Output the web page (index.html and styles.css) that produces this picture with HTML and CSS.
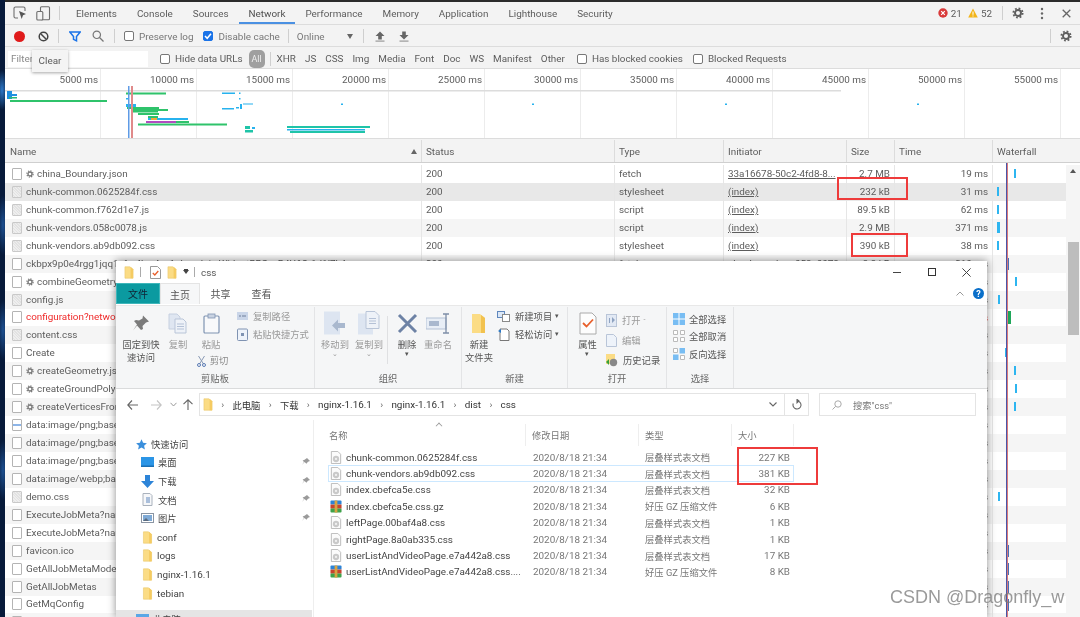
FILE: index.html
```html
<!DOCTYPE html>
<html lang="zh">
<head>
<meta charset="utf-8">
<title>Network</title>
<link rel="stylesheet" href="styles.css">
</head>
<body>
<svg class="defs" width="0" height="0" aria-hidden="true">
  <symbol id="gear" viewBox="0 0 16 16"><circle cx="8" cy="8" r="4" fill="none" stroke="currentColor" stroke-width="2.6"/><circle cx="8" cy="8" r="6.2" fill="none" stroke="currentColor" stroke-width="2.4" stroke-dasharray="2.4 2.47"/></symbol>
  <symbol id="folder" viewBox="0 0 12 16"><path d="M1 1h6l4 3v11H1z" fill="#fbdc85" stroke="#e9c768" stroke-width=".7"/><path d="M8 1v14h3V4z" fill="#f5cb62"/></symbol>
  <symbol id="cssf" viewBox="0 0 12 14"><path d="M1 .5h7l3 3v10H1z" fill="#fbfbfb" stroke="#b9b9b9"/><circle cx="6" cy="8.6" r="3.4" fill="#c9c9c9"/><circle cx="6" cy="8.6" r="1.2" fill="#f2f2f2"/></symbol>
  <symbol id="rar" viewBox="0 0 13 13"><rect x=".5" width="12" height="4.4" rx="1" fill="#2c83d6"/><rect x=".5" y="4.4" width="12" height="4.4" fill="#c7442f"/><rect x=".5" y="8.8" width="12" height="4.2" rx="1" fill="#3fa24a"/><rect x="5" width="3" height="13" fill="#d9a441"/></symbol>
  <symbol id="pin" viewBox="0 0 10 10"><path d="M6 1l3 3-2 .7-1.6 2L3.600 5 1 8l2-3-1.400-1.500 2-.8z" fill="#9a9a9a"/></symbol>
</svg>

<div class="screen">
  <div class="desk"></div>
  <main class="devtools">

    <header class="tabbar">
      <div class="tool-ic">
        <svg width="14" height="14" viewBox="0 0 14 14"><path d="M5 12H2.500A1.500 1.500 0 0 1 1 10.500v-8A1.500 1.500 0 0 1 2.500 1h8A1.500 1.500 0 0 1 12 2.500V5" fill="none" stroke="#6e6e6e" stroke-width="1.100"/><path d="M6 5l7 3-3 1.200L8.700 13z" fill="#555"/></svg>
      </div>
      <div class="tool-ic second">
        <svg width="15" height="15" viewBox="0 0 15 15"><rect x="4.500" y=".8" width="9" height="13" rx="1" fill="none" stroke="#6e6e6e" stroke-width="1.100"/><rect x=".8" y="5.500" width="6" height="8.500" rx="1" fill="#f3f3f3" stroke="#6e6e6e" stroke-width="1.100"/></svg>
      </div>
      <span class="vsep tabsep"></span>
      <nav class="tabs">
        <span class="tab">Elements</span>
        <span class="tab">Console</span>
        <span class="tab">Sources</span>
        <span class="tab active">Network</span>
        <span class="tab">Performance</span>
        <span class="tab">Memory</span>
        <span class="tab">Application</span>
        <span class="tab">Lighthouse</span>
        <span class="tab">Security</span>
      </nav>
      <div class="status-ic">
        <svg width="10" height="10" viewBox="0 0 10 10"><circle cx="5" cy="5" r="4.700" fill="#d93a3a"/><path d="M3.200 3.200l3.600 3.600M6.800 3.200l-3.600 3.600" stroke="#fff" stroke-width="1.200"/></svg>
        <span class="count">21</span>
        <svg width="10" height="10" viewBox="0 0 10 10"><path d="M5 .5L9.800 9.500H.2z" fill="#f2b418"/><rect x="4.500" y="3.500" width="1" height="3.300" fill="#fff"/><rect x="4.500" y="7.500" width="1" height="1" fill="#fff"/></svg>
        <span class="count">52</span>
      </div>
      <span class="vsep statsep"></span>
      <svg class="gear tabgear"><use href="#gear"/></svg>
      <svg class="dots" width="4" height="13" viewBox="0 0 4 13"><circle cx="2" cy="2" r="1.200" fill="#666"/><circle cx="2" cy="6.500" r="1.200" fill="#666"/><circle cx="2" cy="11" r="1.200" fill="#666"/></svg>
      <svg class="xclose" width="9" height="9" viewBox="0 0 9 9"><path d="M.7.7l7.600 7.600M8.300.7L.7 8.300" stroke="#666" stroke-width="1.300"/></svg>
    </header>

    <section class="toolbar">
      <span class="rec"></span>
      <svg class="ic-clear" width="11" height="11" viewBox="0 0 11 11"><circle cx="5.500" cy="5.500" r="4.300" fill="none" stroke="#444" stroke-width="1.500"/><path d="M2.500 2.500l6 6" stroke="#444" stroke-width="1.500"/></svg>
      <span class="vsep s1"></span>
      <svg class="ic-filter" width="12" height="11" viewBox="0 0 12 11"><path d="M.8 1h10.400L7.500 5.400V9.800L4.500 8.300V5.400z" fill="none" stroke="#1a73e8" stroke-width="1.500"/></svg>
      <svg class="ic-search" width="12" height="12" viewBox="0 0 12 12"><circle cx="4.800" cy="4.800" r="3.700" fill="none" stroke="#777" stroke-width="1.200"/><path d="M7.500 7.500l4 4" stroke="#777" stroke-width="1.300"/></svg>
      <span class="vsep s2"></span>
      <span class="cb"></span><span class="lbl pres">Preserve log</span>
      <span class="cb on"><svg width="10" height="10" viewBox="0 0 10 10"><path d="M2 5l2.200 2.300L8 2.800" fill="none" stroke="#fff" stroke-width="1.500"/></svg></span><span class="lbl dis">Disable cache</span>
      <span class="vsep s3"></span>
      <span class="lbl online">Online</span>
      <span class="caret"></span>
      <span class="vsep s4"></span>
      <svg class="ic-up" width="10" height="11" viewBox="0 0 10 11"><path d="M5 .5L9.500 5H6.800v3.500H3.200V5H.5z" fill="#666"/><rect x=".5" y="9.500" width="9" height="1.200" fill="#999"/></svg>
      <svg class="ic-down" width="10" height="11" viewBox="0 0 10 11"><path d="M5 8.500L.5 4h2.700V.5h3.600V4h2.700z" fill="#666"/><rect x=".5" y="9.500" width="9" height="1.200" fill="#999"/></svg>
      <span class="spacer"></span>
      <span class="vsep s5"></span>
      <svg class="gear bargear"><use href="#gear"/></svg>
    </section>

    <section class="filterbar">
      <div class="finput">Filter</div>
      <span class="cb hide"></span><span class="lbl">Hide data URLs</span>
      <span class="pill">All</span>
      <span class="vsep s6"></span>
      <span class="ft">XHR</span><span class="ft">JS</span><span class="ft">CSS</span><span class="ft">Img</span><span class="ft">Media</span><span class="ft">Font</span><span class="ft">Doc</span><span class="ft">WS</span><span class="ft">Manifest</span><span class="ft">Other</span>
      <span class="cb blk1"></span><span class="lbl">Has blocked cookies</span>
      <span class="cb blk2"></span><span class="lbl">Blocked Requests</span>
    </section>

    <section class="overview">
      <div class="ticks">
        <span>5000 ms</span><span>10000 ms</span><span>15000 ms</span><span>20000 ms</span><span>25000 ms</span><span>30000 ms</span><span>35000 ms</span><span>40000 ms</span><span>45000 ms</span><span>50000 ms</span><span>55000 ms</span>
      </div>
      <svg class="chart" width="1075" height="69" viewBox="5 69 1075 69">
        <rect x="5" y="90" width="836" height="1.500" fill="#dcdcdc"/>
        <rect x="7" y="91" width="5" height="8" fill="#1f8fe0"/><rect x="11" y="94" width="6" height="2" fill="#1f8fe0"/>
        <rect x="9" y="97" width="8" height="1.500" fill="#28b87a"/>
        <rect x="10" y="100" width="97" height="2" fill="#2fc36b"/>
        <rect x="126" y="92.500" width="40" height="2" fill="#2fc36b"/>
        <rect x="222" y="92.500" width="13" height="1.500" fill="#27b2ee"/><rect x="239" y="92.500" width="1.500" height="1.500" fill="#27b2ee"/><rect x="239" y="98" width="1.500" height="1.500" fill="#27b2ee"/>
        <rect x="126" y="98" width="3" height="1.500" fill="#27b2ee"/>
        <rect x="126" y="104" width="10" height="3" fill="#27b2ee"/>
        <rect x="127" y="107" width="32" height="2" fill="#2fc36b"/><rect x="131" y="109" width="37" height="2" fill="#2fc36b"/><rect x="132" y="111" width="26" height="1.500" fill="#2fc36b"/>
        <rect x="138" y="113" width="21" height="2" fill="#2fc36b"/>
        <rect x="148" y="116" width="10" height="2" fill="#2fc36b"/>
        <rect x="148" y="118" width="40" height="2" fill="#27b2ee"/><rect x="151" y="118" width="6" height="2" fill="#f2a93b"/>
        <rect x="146" y="121" width="30" height="2" fill="#b04cc0"/><rect x="176" y="121" width="13" height="2" fill="#2fc36b"/>
        <rect x="138" y="123.500" width="89" height="2" fill="#2fc36b"/>
        <rect x="222" y="108" width="12" height="1.500" fill="#27b2ee"/><rect x="236" y="107" width="3" height="1.500" fill="#27b2ee"/><rect x="240" y="104" width="2" height="5" fill="#27b2ee"/><rect x="243" y="103.500" width="10" height="1" fill="#27b2ee"/>
        <rect x="341" y="103.500" width="2" height="1.500" fill="#27b2ee"/><rect x="532" y="103.500" width="2" height="1.500" fill="#27b2ee"/><rect x="725" y="103.500" width="2" height="1.500" fill="#27b2ee"/><rect x="917" y="103.500" width="2" height="1.500" fill="#27b2ee"/>
        <rect x="245" y="126" width="5" height="3" fill="#1fc4a8"/><rect x="245" y="130" width="8" height="2.500" fill="#1fc4a8"/><rect x="252" y="127" width="3" height="2" fill="#27b2ee"/>
        <rect x="287" y="126" width="83" height="2" fill="#1fc4a8"/><rect x="287" y="129" width="78" height="1.500" fill="#27b2ee"/><rect x="290" y="131" width="75" height="2" fill="#1fc4a8"/>
        <rect x="128" y="86" width="1.500" height="52" fill="#5f9be6"/><rect x="131" y="86" width="2" height="52" fill="#e08a8a"/>
      </svg>
    </section>

    <div class="thead">
      <div class="th name-h">Name<span class="sort"></span></div>
      <div class="th">Status</div>
      <div class="th">Type</div>
      <div class="th">Initiator</div>
      <div class="th">Size</div>
      <div class="th">Time</div>
      <div class="th wf-h">Waterfall</div>
    </div>

    <div class="tbody">
      <div class="rows">
        <div class="row"><div class="cell name"><i class="fi"></i><svg class="mini"><use href="#gear"/></svg><span>china_Boundary.json</span></div><div class="cell">200</div><div class="cell">fetch</div><div class="cell"><u>33a16678-50c2-4fd8-8...</u></div><div class="cell num">2.7 MB</div><div class="cell num">19 ms</div><div class="cell wf"><b class="bar" style="left:21px"></b></div></div>
        <div class="row sel"><div class="cell name"><i class="fi doc"></i><span>chunk-common.0625284f.css</span></div><div class="cell">200</div><div class="cell">stylesheet</div><div class="cell"><u>(index)</u></div><div class="cell num">232 kB</div><div class="cell num">31 ms</div><div class="cell wf"><b class="bar" style="left:4px"></b></div></div>
        <div class="row"><div class="cell name"><i class="fi doc"></i><span>chunk-common.f762d1e7.js</span></div><div class="cell">200</div><div class="cell">script</div><div class="cell"><u>(index)</u></div><div class="cell num">89.5 kB</div><div class="cell num">62 ms</div><div class="cell wf"><b class="bar" style="left:4px"></b></div></div>
        <div class="row alt"><div class="cell name"><i class="fi doc"></i><span>chunk-vendors.058c0078.js</span></div><div class="cell">200</div><div class="cell">script</div><div class="cell"><u>(index)</u></div><div class="cell num">2.9 MB</div><div class="cell num">371 ms</div><div class="cell wf"><b class="bar wide" style="left:4px"></b></div></div>
        <div class="row"><div class="cell name"><i class="fi doc"></i><span>chunk-vendors.ab9db092.css</span></div><div class="cell">200</div><div class="cell">stylesheet</div><div class="cell"><u>(index)</u></div><div class="cell num">390 kB</div><div class="cell num">38 ms</div><div class="cell wf"><b class="bar" style="left:4px"></b></div></div>
        <div class="row alt"><div class="cell name"><i class="fi"></i><span>ckbpx9p0e4rgg1jqq1xfm4hw4vs1ukvwdqjv-WidgetBBS-v-B4U6Q-1d1l7k4</span></div><div class="cell">200</div><div class="cell">fetch</div><div class="cell"><u>chunk-vendors.058c0078...</u></div><div class="cell num">3.3 kB</div><div class="cell num">210 ms</div><div class="cell wf"><b class="bar navy" style="left:14px"></b></div></div>
        <div class="row"><div class="cell name"><i class="fi"></i><svg class="mini"><use href="#gear"/></svg><span>combineGeometry.js</span></div><div class="cell">200</div><div class="cell"></div><div class="cell"></div><div class="cell num"></div><div class="cell num">16 ms</div><div class="cell wf"><b class="bar" style="left:22px"></b></div></div>
        <div class="row alt"><div class="cell name"><i class="fi doc"></i><span>config.js</span></div><div class="cell">200</div><div class="cell"></div><div class="cell"></div><div class="cell num"></div><div class="cell num">24 ms</div><div class="cell wf"><b class="bar" style="left:5px"></b></div></div>
        <div class="row"><div class="cell name red"><i class="fi"></i><span>configuration?network</span></div><div class="cell">500</div><div class="cell"></div><div class="cell"></div><div class="cell num"></div><div class="cell num red">96 ms</div><div class="cell wf"><b class="bar green" style="left:14px"></b></div></div>
        <div class="row alt"><div class="cell name"><i class="fi doc"></i><span>content.css</span></div><div class="cell">200</div><div class="cell"></div><div class="cell"></div><div class="cell num"></div><div class="cell num">14 ms</div><div class="cell wf"></div></div>
        <div class="row"><div class="cell name"><i class="fi"></i><span>Create</span></div><div class="cell">200</div><div class="cell"></div><div class="cell"></div><div class="cell num"></div><div class="cell num">31 ms</div><div class="cell wf"><b class="bar" style="left:12px"></b></div></div>
        <div class="row alt"><div class="cell name"><i class="fi"></i><svg class="mini"><use href="#gear"/></svg><span>createGeometry.js</span></div><div class="cell">200</div><div class="cell"></div><div class="cell"></div><div class="cell num"></div><div class="cell num">15 ms</div><div class="cell wf"><b class="bar" style="left:21px"></b></div></div>
        <div class="row"><div class="cell name"><i class="fi"></i><svg class="mini"><use href="#gear"/></svg><span>createGroundPolygon.js</span></div><div class="cell">200</div><div class="cell"></div><div class="cell"></div><div class="cell num"></div><div class="cell num">18 ms</div><div class="cell wf"><b class="bar" style="left:22px"></b></div></div>
        <div class="row alt"><div class="cell name"><i class="fi"></i><svg class="mini"><use href="#gear"/></svg><span>createVerticesFromGeo.js</span></div><div class="cell">200</div><div class="cell"></div><div class="cell"></div><div class="cell num"></div><div class="cell num">17 ms</div><div class="cell wf"><b class="bar" style="left:21px"></b></div></div>
        <div class="row"><div class="cell name"><i class="fi dash"></i><span>data:image/png;base64,iVBOR</span></div><div class="cell">200</div><div class="cell"></div><div class="cell"></div><div class="cell num"></div><div class="cell num">1 ms</div><div class="cell wf"></div></div>
        <div class="row alt"><div class="cell name"><i class="fi"></i><span>data:image/png;base64,iVBOR</span></div><div class="cell">200</div><div class="cell"></div><div class="cell"></div><div class="cell num"></div><div class="cell num">1 ms</div><div class="cell wf"></div></div>
        <div class="row"><div class="cell name"><i class="fi"></i><span>data:image/png;base64,iVBOR</span></div><div class="cell">200</div><div class="cell"></div><div class="cell"></div><div class="cell num"></div><div class="cell num">1 ms</div><div class="cell wf"></div></div>
        <div class="row alt"><div class="cell name"><i class="fi"></i><span>data:image/webp;base64,UklG</span></div><div class="cell">200</div><div class="cell"></div><div class="cell"></div><div class="cell num"></div><div class="cell num">1 ms</div><div class="cell wf"></div></div>
        <div class="row"><div class="cell name"><i class="fi doc"></i><span>demo.css</span></div><div class="cell">200</div><div class="cell"></div><div class="cell"></div><div class="cell num"></div><div class="cell num">20 ms</div><div class="cell wf"><b class="bar" style="left:5px"></b></div></div>
        <div class="row alt"><div class="cell name"><i class="fi"></i><span>ExecuteJobMeta?name</span></div><div class="cell">200</div><div class="cell"></div><div class="cell"></div><div class="cell num"></div><div class="cell num">33 ms</div><div class="cell wf"></div></div>
        <div class="row"><div class="cell name"><i class="fi"></i><span>ExecuteJobMeta?name</span></div><div class="cell">200</div><div class="cell"></div><div class="cell"></div><div class="cell num"></div><div class="cell num">36 ms</div><div class="cell wf"></div></div>
        <div class="row alt"><div class="cell name"><i class="fi"></i><span>favicon.ico</span></div><div class="cell">200</div><div class="cell"></div><div class="cell"></div><div class="cell num"></div><div class="cell num">12 ms</div><div class="cell wf"><b class="bar navy" style="left:14px"></b></div></div>
        <div class="row"><div class="cell name"><i class="fi"></i><span>GetAllJobMetaModels</span></div><div class="cell">200</div><div class="cell"></div><div class="cell"></div><div class="cell num"></div><div class="cell num">41 ms</div><div class="cell wf"><b class="bar navy" style="left:14px"></b></div></div>
        <div class="row alt"><div class="cell name"><i class="fi"></i><span>GetAllJobMetas</span></div><div class="cell">200</div><div class="cell"></div><div class="cell"></div><div class="cell num"></div><div class="cell num">38 ms</div><div class="cell wf"><b class="bar navy" style="left:14px"></b></div></div>
        <div class="row"><div class="cell name"><i class="fi"></i><span>GetMqConfig</span></div><div class="cell">200</div><div class="cell"></div><div class="cell"></div><div class="cell num"></div><div class="cell num">29 ms</div><div class="cell wf"><b class="bar navy" style="left:14px"></b></div></div>
        <div class="row alt"><div class="cell name"><i class="fi"></i></div><div class="cell"></div><div class="cell"></div><div class="cell"></div><div class="cell num"></div><div class="cell num"></div><div class="cell wf"></div></div>
      </div>
      <aside class="scroll"><span class="sc-up"></span><span class="thumb"></span></aside>
    </div>
  </main>
</div>

<div class="tip">Clear</div>
<div class="vline blue"></div>
<div class="vline redl"></div>

<div class="explorer">
  <div class="titlebar">
    <svg class="t-folder"><use href="#folder"/></svg>
    <span class="t-sep"></span>
    <svg class="t-doc" width="11" height="13" viewBox="0 0 11 13"><path d="M.5.5h7l3 3v9H.5z" fill="#fff" stroke="#999"/><path d="M2.800 7l2 2 3.500-4" fill="none" stroke="#e8602c" stroke-width="1.300"/></svg>
    <svg class="t-folder t2"><use href="#folder"/></svg>
    <span class="t-drop"></span>
    <span class="t-sep s"></span>
    <span class="t-name">css</span>
    <span class="spacer"></span>
    <span class="w-min"></span>
    <span class="w-max"></span>
    <svg class="w-close" width="9" height="9" viewBox="0 0 9 9"><path d="M.4.4l8.200 8.200M8.600.4L.4 8.600" stroke="#444" stroke-width="1"/></svg>
  </div>
  <div class="rtabs">
    <span class="rt file">文件</span>
    <span class="rt home">主页</span>
    <span class="rt">共享</span>
    <span class="rt">查看</span>
    <span class="spacer"></span>
    <svg class="r-chev" width="8" height="5" viewBox="0 0 8 5"><path d="M.5 4.500L4 1l3.500 3.500" fill="none" stroke="#999"/></svg>
    <span class="r-help">?</span>
  </div>
  <div class="ribbon">
    <div class="group g-clip">
      <div class="gbody">
        <div class="big w-pin">
          <svg width="20" height="20" viewBox="0 0 20 20"><path d="M12 2l6 6-3 1-3.500 3.500.5 3-2 1L6 12l-4 5 4-6-3-3.500 2-1 3 .5L11.500 5z" fill="#7b7b7b"/></svg>
          <span>固定到快<br>速访问</span>
        </div>
        <div class="big w-cp dim">
          <svg width="20" height="21" viewBox="0 0 20 21"><path d="M1 1h8l3 3v12H1z" fill="#dfe6f1" stroke="#c6d0e0"/><path d="M7 6h8l3 3v11H7z" fill="#eef2f8" stroke="#b9c5d8"/><path d="M9 11h7M9 13.500h7M9 16h7" stroke="#b4c1d6"/></svg>
          <span>复制</span>
        </div>
        <div class="big w-paste">
          <svg width="17" height="21" viewBox="0 0 17 21"><rect x="1" y="3" width="15" height="17" rx="1" fill="#f8f9fb" stroke="#7f93b2" stroke-width="1.200"/><rect x="5" y="1" width="7" height="4" fill="#c9d3e2" stroke="#7f93b2" stroke-width=".8"/></svg>
          <span class="dimt">粘贴</span>
          <span class="cut"><svg width="9" height="12" viewBox="0 0 9 12"><path d="M1.500 1l5 8M7.500 1l-5 8" stroke="#8a9ab5"/><circle cx="2" cy="10" r="1.500" fill="none" stroke="#5c7db5"/><circle cx="7" cy="10" r="1.500" fill="none" stroke="#5c7db5"/></svg><em>剪切</em></span>
        </div>
        <div class="smalls w-copy">
          <span class="sm dim"><svg width="11" height="8" viewBox="0 0 11 8"><rect width="11" height="8" fill="#c9d5e8"/><path d="M2 4h2M5 4h4" stroke="#6e7f9b"/></svg>复制路径</span>
          <span class="sm dim"><svg width="11" height="13" viewBox="0 0 11 13"><rect x=".5" y="1" width="10" height="11.500" rx="1" fill="#eef3fa" stroke="#7f93b2"/><path d="M4 5h3v3H4z" fill="#7f93b2"/></svg>粘贴快捷方式</span>
        </div>
      </div>
      <div class="glabel">剪贴板</div>
    </div>
    <div class="group g-org">
      <div class="gbody">
        <div class="big w-move dim">
          <svg width="22" height="24" viewBox="0 0 22 24"><rect width="16" height="23" fill="#dde5f1"/><path d="M8 14l6-6v3.500h7v5h-7v3.500z" fill="#a9b8ce"/></svg>
          <span>移动到<small>⌄</small></span>
        </div>
        <div class="big w-copyto dim">
          <svg width="22" height="24" viewBox="0 0 22 24"><rect y="2" width="15" height="21" fill="#dde5f1"/><path d="M8 0h9l4 4v13H8z" fill="#eef2f8" stroke="#b9c5d8"/><path d="M11 7h7M11 9.500h7M11 12h7" stroke="#b4c1d6"/></svg>
          <span>复制到<small>⌄</small></span>
        </div>
        <span class="rsep"></span>
        <div class="big w-del">
          <svg width="21" height="21" viewBox="0 0 21 21"><path d="M2 2l17 17M19 2L2 19" stroke="#6d82a5" stroke-width="3"/></svg>
          <span>删除<small>▾</small></span>
        </div>
        <div class="big w-ren dim">
          <svg width="24" height="21" viewBox="0 0 24 21"><rect y="5" width="20" height="11" fill="#e8eef6" stroke="#b4c1d6"/><rect x="3" y="8" width="10" height="5" fill="#a9b8ce"/><path d="M17 1h6M17 20h6M20 1v19" stroke="#7d8ea8" stroke-width="1.300"/></svg>
          <span>重命名</span>
        </div>
      </div>
      <div class="glabel">组织</div>
    </div>
    <div class="group g-new">
      <div class="gbody">
        <div class="big w-nf">
          <svg width="16" height="21" viewBox="0 0 16 21"><path d="M1 1h8l5 4v15H1z" fill="#fbdc85"/><path d="M10 2v18h4V5z" fill="#f2c24f"/></svg>
          <span>新建<br>文件夹</span>
        </div>
        <div class="smalls w-ni">
          <span class="sm"><svg width="13" height="11" viewBox="0 0 13 11"><rect x=".5" y=".5" width="7" height="6" fill="#dbe7f6" stroke="#5f87bd"/><rect x="5.500" y="3.500" width="7" height="7" fill="#fff" stroke="#8a8a8a"/></svg>新建项目<small>▾</small></span>
          <span class="sm"><svg width="13" height="13" viewBox="0 0 13 13"><path d="M3 1h7l2 2v9.500H3z" fill="#fff" stroke="#777"/><path d="M1 3l3-2v4z" fill="#2a78c8"/></svg>轻松访问<small>▾</small></span>
        </div>
      </div>
      <div class="glabel">新建</div>
    </div>
    <div class="group g-open">
      <div class="gbody">
        <div class="big w-prop">
          <svg width="18" height="23" viewBox="0 0 18 23"><path d="M1 1h12l4 4v17H1z" fill="#fdfdfd" stroke="#aaa"/><path d="M4 11l3.500 3.500L14 7.500" fill="none" stroke="#e8602c" stroke-width="1.800"/></svg>
          <span>属性<small>▾</small></span>
        </div>
        <div class="smalls w-op">
          <span class="sm dim"><svg width="11" height="13" viewBox="0 0 11 13"><rect x=".5" y=".5" width="10" height="12" fill="#e2e9f4" stroke="#b9c5d8"/><path d="M3 4h1v5H3zM6 3l3 3-3 3z" fill="#8fa3c1"/></svg>打开 <small>-</small></span>
          <span class="sm dim"><svg width="11" height="13" viewBox="0 0 11 13"><path d="M.5.5h7l3 3v9H.5z" fill="#eef3fa" stroke="#b9c5d8"/></svg>编辑</span>
          <span class="sm"><svg width="12" height="13" viewBox="0 0 12 13"><rect width="9" height="10" fill="#fbdc85"/><circle cx="7.500" cy="8.500" r="3.700" fill="#888"/><path d="M0 8l3-3v6z" fill="#38a13c"/></svg>历史记录</span>
        </div>
      </div>
      <div class="glabel">打开</div>
    </div>
    <div class="group g-sel">
      <div class="gbody">
        <div class="smalls w-sel">
          <span class="sm"><svg class="gr" width="12" height="12" viewBox="0 0 12 12"><path d="M0 0h12v12H0z" fill="#78bdf3"/><path d="M6 0v12M0 6h12" stroke="#fff"/></svg>全部选择</span>
          <span class="sm"><svg class="gr" width="12" height="12" viewBox="0 0 12 12"><path d="M.5.500h4v4h-4zM7.500.500h4v4h-4zM.5 7.500h4v4h-4zM7.500 7.500h4v4h-4z" fill="#fff" stroke="#bbb"/></svg>全部取消</span>
          <span class="sm"><svg class="gr" width="12" height="12" viewBox="0 0 12 12"><path d="M.5.500h4v4h-4zM7.500 7.500h4v4h-4z" fill="#fff" stroke="#bbb"/><path d="M6.500 0H12v5.500H6.500zM0 6.500h5.500V12H0z" fill="#78bdf3"/></svg>反向选择</span>
        </div>
      </div>
      <div class="glabel">选择</div>
    </div>
  </div>

  <div class="addr">
    <svg class="nav-a" width="11" height="10" viewBox="0 0 11 10"><path d="M5 .5L.8 5 5 9.500M1 5h10" fill="none" stroke="#666" stroke-width="1.100"/></svg>
    <svg class="nav-f" width="11" height="10" viewBox="0 0 11 10"><path d="M6 .5L10.200 5 6 9.500M10 5H0" fill="none" stroke="#c4c4c4" stroke-width="1.100"/></svg>
    <svg class="nav-d" width="7" height="5" viewBox="0 0 7 5"><path d="M.5.800L3.500 4 6.500.800" fill="none" stroke="#999"/></svg>
    <svg class="nav-u" width="10" height="11" viewBox="0 0 10 11"><path d="M.5 5.200L5 .8l4.500 4.400M5 1v10" fill="none" stroke="#666" stroke-width="1.100"/></svg>
    <div class="crumbs">
      <svg class="c-f"><use href="#folder"/></svg>
      <span class="chev">›</span><span class="zh">此电脑</span>
      <span class="chev">›</span><span class="zh">下载</span>
      <span class="chev">›</span><span>nginx-1.16.1</span>
      <span class="chev">›</span><span>nginx-1.16.1</span>
      <span class="chev">›</span><span>dist</span>
      <span class="chev">›</span><span>css</span>
      <span class="spacer"></span>
      <svg class="c-drop" width="8" height="5" viewBox="0 0 8 5"><path d="M.5.500L4 4 7.500.500" fill="none" stroke="#666" stroke-width="1.100"/></svg>
      <span class="refresh"><svg width="10" height="11" viewBox="0 0 10 11"><path d="M5 2a4 4 0 1 1-3.700 2.500M5 .3v3.400L7 2z" fill="none" stroke="#666" stroke-width="1.100"/></svg></span>
    </div>
    <div class="search">
      <svg width="10" height="10" viewBox="0 0 10 10"><circle cx="6" cy="4" r="3.200" fill="none" stroke="#aaa"/><path d="M3.700 6.300L.5 9.500" stroke="#aaa"/></svg>
      <span>搜索"css"</span>
    </div>
  </div>

  <div class="content">
    <aside class="navpane">
      <div class="qa"><svg width="11" height="11" viewBox="0 0 11 11"><path d="M5.500.3l1.600 3.500 3.800.4-2.800 2.500.8 3.800-3.400-2-3.400 2 .8-3.800L.1 4.200l3.800-.4z" fill="#3b8fdc"/></svg><span class="zh">快速访问</span></div>
      <div class="ni"><svg width="13" height="10" viewBox="0 0 13 10"><rect width="13" height="10" fill="#2b95e6"/><rect y="8.500" width="13" height="1.500" fill="#1a6fb3"/></svg><span class="zh">桌面</span><svg class="p"><use href="#pin"/></svg></div>
      <div class="ni"><svg width="13" height="13" viewBox="0 0 13 13"><path d="M4 0h5v6h4l-6.500 7L0 6h4z" fill="#2d84d8"/></svg><span class="zh">下载</span><svg class="p"><use href="#pin"/></svg></div>
      <div class="ni"><svg width="13" height="13" viewBox="0 0 13 13"><path d="M2 .5h7l2 2v10H2z" fill="#f6f7f9" stroke="#aab2bd"/><path d="M5 5h4M5 7h4M5 9h4" stroke="#5f87bd"/></svg><span class="zh">文档</span><svg class="p"><use href="#pin"/></svg></div>
      <div class="ni"><svg width="13" height="10" viewBox="0 0 13 10"><rect x=".5" y=".5" width="12" height="9" fill="#fff" stroke="#8a95a3"/><rect x="2" y="2" width="9" height="6" fill="#7faad6"/><path d="M2 8l3-3 3 3z" fill="#5a6a7d"/></svg><span class="zh">图片</span><svg class="p"><use href="#pin"/></svg></div>
      <div class="ni"><svg class="nf"><use href="#folder"/></svg><span>conf</span></div>
      <div class="ni"><svg class="nf"><use href="#folder"/></svg><span>logs</span></div>
      <div class="ni"><svg class="nf"><use href="#folder"/></svg><span>nginx-1.16.1</span></div>
      <div class="ni"><svg class="nf"><use href="#folder"/></svg><span>tebian</span></div>
      <div class="pc"><svg width="13" height="10" viewBox="0 0 13 10"><rect width="13" height="9" fill="#5aa7e6"/></svg><span class="zh">此电脑</span></div>
    </aside>
    <div class="files">
      <div class="fhead">
        <span class="fh c1">名称</span><span class="fh c2">修改日期</span><span class="fh c3">类型</span><span class="fh c4">大小</span>
      </div>
      <div class="fr"><svg class="fic"><use href="#cssf"/></svg><span class="c1">chunk-common.0625284f.css</span><span class="c2">2020/8/18 21:34</span><span class="c3">层叠样式表文档</span><span class="c4">227 KB</span></div>
      <div class="fr on"><svg class="fic"><use href="#cssf"/></svg><span class="c1">chunk-vendors.ab9db092.css</span><span class="c2">2020/8/18 21:34</span><span class="c3">层叠样式表文档</span><span class="c4">381 KB</span></div>
      <div class="fr"><svg class="fic"><use href="#cssf"/></svg><span class="c1">index.cbefca5e.css</span><span class="c2">2020/8/18 21:34</span><span class="c3">层叠样式表文档</span><span class="c4">32 KB</span></div>
      <div class="fr"><svg class="fic"><use href="#rar"/></svg><span class="c1">index.cbefca5e.css.gz</span><span class="c2">2020/8/18 21:34</span><span class="c3">好压 GZ 压缩文件</span><span class="c4">6 KB</span></div>
      <div class="fr"><svg class="fic"><use href="#cssf"/></svg><span class="c1">leftPage.00baf4a8.css</span><span class="c2">2020/8/18 21:34</span><span class="c3">层叠样式表文档</span><span class="c4">1 KB</span></div>
      <div class="fr"><svg class="fic"><use href="#cssf"/></svg><span class="c1">rightPage.8a0ab335.css</span><span class="c2">2020/8/18 21:34</span><span class="c3">层叠样式表文档</span><span class="c4">1 KB</span></div>
      <div class="fr"><svg class="fic"><use href="#cssf"/></svg><span class="c1">userListAndVideoPage.e7a442a8.css</span><span class="c2">2020/8/18 21:34</span><span class="c3">层叠样式表文档</span><span class="c4">17 KB</span></div>
      <div class="fr"><svg class="fic"><use href="#rar"/></svg><span class="c1">userListAndVideoPage.e7a442a8.css....</span><span class="c2">2020/8/18 21:34</span><span class="c3">好压 GZ 压缩文件</span><span class="c4">8 KB</span></div>
    </div>
  </div>
</div>

<div class="mark m1"></div>
<div class="mark m2"></div>
<div class="mark m3"></div>
<div class="watermark">CSDN @Dragonfly_w</div>
</body>
</html>
```
FILE: styles.css
```css
* { box-sizing: border-box; }
html, body { margin: 0; height: 617px; overflow: hidden; }
body {
  position: relative;
  width: 1080px;
  font-family: Roboto, "Noto Sans CJK SC", sans-serif;
  font-size: 9.9px;
  color: #5c5c5c;
  background: #fff;
  filter: blur(.4px);
}
.defs { position: absolute; }
.spacer { flex: 1; }
.zh { font-size: 9.3px; }

.screen { display: flex; height: 617px; background: #2b2b2b; padding-top: 2px; }
.desk {
  width: 5px; margin-top: -2px; flex: none;
  background:
    radial-gradient(6px 20px at 2px 90px, #2d78c8, transparent),
    radial-gradient(6px 30px at 3px 225px, #1c4f90, transparent),
    radial-gradient(6px 30px at 3px 330px, #1c4f90, transparent),
    radial-gradient(6px 30px at 3px 470px, #1c4f90, transparent),
    #071a3a;
}
.devtools { flex: 1; min-width: 0; display: flex; flex-direction: column; background: #fff; }

.vsep { width: 1px; height: 14px; background: #cfcfcf; flex: none; }

/* main tabs */
.tabbar { height: 23px; display: flex; align-items: center; background: #f3f3f3; border-bottom: 1px solid #dcdcdc; flex: none; }
.tool-ic { margin-left: 8px; display: flex; }
.tool-ic.second { margin-left: 9px; }
.tabsep { margin-left: 8px; }
.tabs { display: flex; align-self: stretch; margin-left: 6px; }
.tab { padding: 0 10px; display: flex; align-items: center; }
.tab.active { box-shadow: inset 0 -2px 0 #4a90e2; color: #4f4f4f; }
.status-ic { margin-left: auto; display: flex; align-items: center; gap: 3px; }
.count { margin-right: 3px; }
.statsep { margin-left: 7px; }
.gear { width: 12px; height: 12px; color: #5e5e5e; flex: none; }
.tabgear { margin-left: 9px; }
.dots { margin-left: 16px; }
.xclose { margin-left: 18px; margin-right: 9px; }

/* toolbar */
.toolbar { height: 22px; padding-top: 1px; display: flex; align-items: center; background: #f3f3f3; border-bottom: 1px solid #dcdcdc; flex: none; }
.rec { width: 11px; height: 11px; border-radius: 50%; background: #e01b1b; margin-left: 9px; flex: none; }
.ic-clear { margin-left: 13px; }
.s1 { margin-left: 9px; }
.ic-filter { margin-left: 10px; }
.ic-search { margin-left: 11px; }
.s2 { margin-left: 10px; }
.cb { width: 10px; height: 10px; border: 1px solid #777; border-radius: 2px; background: #fff; flex: none; display: block; }
.cb.on { background: #1a73e8; border-color: #1a73e8; position: relative; }
.cb.on svg { position: absolute; left: -1px; top: -1px; }
.s2 + .cb { margin-left: 9px; }
.lbl { white-space: nowrap; margin-left: 5px; }
.pres { color: #777; }
.cb.on { margin-left: 10px; }
.dis { color: #777; }
.s3 { margin-left: 8px; }
.online { margin-left: 8px; color: #777; }
.caret { width: 0; height: 0; border: 3.5px solid transparent; border-top: 5px solid #666; border-bottom: 0; margin-left: 22px; }
.s4 { margin-left: 10px; }
.ic-up { margin-left: 11px; }
.ic-down { margin-left: 14px; }
.s5 { margin-right: 9px; }
.bargear { margin-right: 8px; }

/* filter bar */
.filterbar { height: 22px; padding-top: 2px; display: flex; align-items: center; background: #f3f3f3; border-bottom: 1px solid #dcdcdc; flex: none; }
.finput { width: 140px; height: 16px; margin-left: 3px; background: #fff; padding-left: 3px; line-height: 16px; color: #8a8a8a; flex: none; }
.cb.hide { margin-left: 12px; }
.pill { width: 16px; height: 18px; margin-left: 6px; border-radius: 5px; background: #9f9f9f; color: #eee; font-size: 9px; display: flex; align-items: center; justify-content: center; flex: none; }
.s6 { margin-left: 5px; }
.ft { margin-left: 9px; white-space: nowrap; flex: none; }
.s6 + .ft { margin-left: 6px; }
.cb.blk1 { margin-left: 12px; }
.cb.blk2 { margin-left: 10px; }

/* overview */
.overview { height: 70px; position: relative; background: #fff; border-bottom: 1px solid #dcdcdc; flex: none; }
.ticks { display: grid; grid-template-columns: repeat(11, 96.01px); height: 100%; }
.ticks span { border-right: 1px solid #ececec; text-align: right; padding: 4px 2px 0 0; line-height: 14px; white-space: nowrap; }
.chart { position: absolute; left: 0; top: 0; }

/* table */
.thead { display: grid; grid-template-columns: 417px 193px 109px 123px 48px 98px 87px; height: 24px; padding-top: 1px; background: #f3f3f3; border-bottom: 1px solid #cfcfcf; flex: none; }
.th { padding-left: 4px; display: flex; align-items: center; border-right: 1px solid #dcdcdc; position: relative; }
.name-h { padding-left: 5px; justify-content: space-between; }
.sort { width: 0; height: 0; border: 3.500px solid transparent; border-bottom: 5px solid #666; border-top: 0; margin-right: 4px; }
.wf-h { border-right: 0; }

.tbody { flex: 1; min-height: 0; display: flex; background: #fff; overflow: hidden; padding-top: 2px; }
.rows { width: 1061px; flex: none; }
.row { display: grid; grid-template-columns: 417px 193px 109px 123px 48px 98px 73px; height: 17.95px; align-items: stretch; background: #fff; }
.row.alt { background: #f5f5f5; }
.row.sel { background: #e8e8e8; }
.cell { padding-left: 4px; line-height: 18px; white-space: nowrap; overflow: hidden; border-right: 1px solid #e6e6e6; color: #5c5c5c; }
.cell u { text-decoration: underline; }
.num { text-align: right; padding-right: 4px; }
.cell.name { display: flex; align-items: center; padding-left: 7px; }
.cell.wf { position: relative; border-right: 0; }
.red, .red span { color: #ef2b2b; }
.fi { width: 10px; height: 12px; flex: none; margin-right: 4px; border: 1px solid #b4b4b4; border-radius: 1px; background: #fff; display: block; }
.fi.doc { background: repeating-linear-gradient(45deg, #eee 0 1px, #e2e2e2 1px 2px); border-color: #c9c9c9; }
.fi.dash { background: linear-gradient(#fff 4px, #8db5e8 4px 6px, #fff 6px); }
.mini { width: 8px; height: 8px; color: #777; margin-right: 3px; flex: none; }
.bar { position: absolute; top: 4px; width: 2px; height: 9px; background: #2db5f0; }
.bar.wide { width: 3px; height: 11px; top: 3px; }
.bar.navy { background: #4a6fb5; height: 12px; top: 3px; }
.bar.green { width: 4px; height: 13px; top: 2px; background: #1fa65a; }
.scroll { flex: 1; background: #f5f5f5; position: relative; display: flex; flex-direction: column; align-items: center; }
.sc-up { width: 0; height: 0; border: 3.500px solid transparent; border-bottom: 4px solid #555; border-top: 0; margin-top: 4px; flex: none; }
.thumb { width: 11px; height: 93px; background: #bdbdbd; margin-top: 69px; flex: none; }

/* overlays */
.tip { position: absolute; left: 32px; top: 50px; width: 36px; height: 22px; background: #f4f4f4; box-shadow: 0 1px 3px rgba(0,0,0,.35); line-height: 22px; text-align: center; }
.vline { position: absolute; top: 163px; bottom: 0; width: 1px; }
.vline.blue { left: 1006px; background: #4a55a8; }
.vline.redl { left: 1007px; background: #d97a7a; }

.explorer { position: absolute; left: 116px; top: 261px; width: 871px; height: 356px; background: #fff; box-shadow: 0 0 8px rgba(0,0,0,.45); display: flex; flex-direction: column; color: #555; }
.titlebar { height: 22px; display: flex; align-items: center; flex: none; padding-right: 16px; }
.t-folder { width: 10px; height: 13px; margin-left: 8px; flex: none; }
.t-folder.t2 { margin-left: 6px; }
.t-sep { width: 1px; height: 10px; background: #aaa; margin-left: 6px; }
.t-sep.s { margin-left: 5px; }
.t-doc { margin-left: 9px; }
.t-drop { width: 0; height: 0; border: 3px solid transparent; border-top: 4px solid #444; border-bottom: 0; margin-left: 6px; box-shadow: 0 -2px 0 -1px #444; }
.t-name { margin-left: 6px; }
.w-min { width: 8px; height: 1px; background: #444; }
.w-max { width: 8px; height: 8px; border: 1px solid #333; margin-left: 27px; }
.w-close { margin-left: 26px; }

.rtabs { height: 22px; display: flex; align-items: stretch; flex: none; font-size: 10px; padding: 0 3px 1px 0; }
.rt { width: 41px; display: flex; align-items: center; justify-content: center; }
.rt.file { width: 44px; background: #0b9aa0; color: #123; box-shadow: inset 0 0 0 1px #3fb6ba; }
.rt.home { width: 40px; border: 1px solid #e4e4e4; border-bottom: 0; background: #f6f7f8; }
.r-chev { align-self: center; margin-right: 9px; }
.r-help { align-self: center; width: 11px; height: 11px; border-radius: 50%; background: #0a6fc9; color: #fff; font-size: 9px; font-weight: 700; display: flex; align-items: center; justify-content: center; }

.ribbon { height: 84px; display: flex; background: #f5f6f7; border-top: 1px solid #e8e8e8; border-bottom: 1px solid #dadbdc; flex: none; font-size: 9.3px; }
.group { display: flex; flex-direction: column; border-right: 1px solid #e3e4e6; height: 81px; margin-top: 1px; flex: none; }
.g-clip { width: 199px; }
.g-org { width: 147px; }
.g-new { width: 106px; }
.g-open { width: 99px; }
.g-sel { width: 67px; }
.gbody { height: 64px; display: flex; position: relative; flex: none; }
.glabel { height: 17px; text-align: center; line-height: 16px; color: #666; flex: none; }
.big { display: flex; flex-direction: column; align-items: center; flex: none; text-align: center; line-height: 13px; padding-top: 4px; }
.big > svg { height: 25px; flex: none; }
.big span { display: block; white-space: nowrap; margin-top: 2px; }
.big small { display: block; font-size: 7px; line-height: 6px; }
.dim, .dim span { color: #9a9a9a; }
.dimt { color: #9a9a9a; }
.w-pin { width: 50px; }
.w-cp { width: 24px; }
.w-paste { width: 42px; }
.big .cut { display: flex; align-items: center; gap: 4px; color: #8a8a8a; margin-top: 3px; margin-left: 3px; }
.cut em { font-style: normal; }
.smalls { display: flex; flex-direction: column; flex: none; }
.sm { display: flex; align-items: center; gap: 5px; white-space: nowrap; height: 18px; flex: none; }
.sm svg { flex: none; }
.sm small { font-size: 7px; margin-left: -2px; }
.w-copy { margin-left: 5px; }
.w-move { width: 36px; margin-left: 2px; }
.w-copyto { width: 32px; }
.rsep { width: 1px; height: 48px; background: #dfe0e2; margin: 9px 0 0 2px; flex: none; }
.w-del { width: 36px; margin-left: 1px; }
.w-ren { width: 26px; }
.w-nf { width: 34px; }
.w-ni { margin-left: 1px; }
.w-prop { width: 37px; margin-left: 1px; }
.w-op { padding-top: 4px; gap: 2px; }
.w-sel { margin-left: 6px; padding-top: 3px; }
.w-sel .sm { gap: 4px; height: 17.5px; }

.addr { height: 31px; display: flex; align-items: center; flex: none; }
.nav-a { margin-left: 11px; }
.nav-f { margin-left: 13px; }
.nav-d { margin-left: 8px; }
.nav-u { margin-left: 6px; }
.crumbs { width: 610px; height: 23px; margin-left: 6px; border: 1px solid #e4e4e4; display: flex; align-items: center; color: #333; flex: none; }
.c-f { width: 10px; height: 13px; margin-left: 3px; flex: none; }
.chev { width: 19.500px; text-align: center; color: #666; flex: none; }
.c-drop { margin-right: 7px; }
.refresh { width: 24px; height: 100%; border-left: 1px solid #e4e4e4; display: flex; align-items: center; justify-content: center; }
.search { width: 157px; height: 23px; margin-left: 10px; border: 1px solid #e4e4e4; display: flex; align-items: center; gap: 11px; padding-left: 12px; color: #777; flex: none; font-size: 9.3px; }

.content { flex: 1; min-height: 0; display: flex; overflow: hidden; }
.navpane { width: 198px; border-right: 1px solid #eee; padding-top: 15px; flex: none; color: #444; position: relative; }
.qa { display: flex; align-items: center; height: 18px; padding-left: 20px; gap: 4px; }
.ni { display: flex; align-items: center; height: 18.700px; padding-left: 25px; position: relative; }
.ni > svg:first-child { flex: none; }
.ni span { margin-left: 4px; }
.nf { width: 11px; height: 13px; margin-left: 1px; }
.ni .nf + span { margin-left: 4px; }
.ni .p { position: absolute; left: 185px; top: 4px; width: 10px; height: 10px; }
.pc { display: flex; align-items: center; gap: 4px; height: 18px; padding-left: 20px; background: #e5e5e5; margin-right: 1px; margin-top: 7px; }

.files { flex: 1; min-width: 0; padding-top: 2px; }
.fhead { height: 26px; display: grid; grid-template-columns: 198px 113px 93px 62px; margin-left: 14px; margin-bottom: 1px; font-size: 9.3px; color: #777; position: relative; }
.fhead::before { content: ""; position: absolute; left: 108px; top: 1px; width: 5px; height: 5px; border-left: 1px solid #999; border-top: 1px solid #999; transform: rotate(45deg) scale(.8); }
.fh { display: flex; align-items: center; padding-left: 6px; border-right: 1px solid #eee; height: 22px; margin-top: 2px; }
.fh.c1 { padding-left: 1px; }
.fr { display: grid; grid-template-columns: 12px 188px 112px 90px 58px; align-items: center; height: 16.400px; width: 466px; margin-left: 14px; padding-left: 2px; white-space: nowrap; color: #555; }
.fr.on { outline: 1px solid #cce8ff; outline-offset: -1px; }
.fic { width: 12px; height: 13px; }
.fr .c1 { margin-left: 4px; color: #444; }
.fr .c2 { margin-left: 3px; color: #777; }
.fr .c3 { font-size: 9.300px; color: #777; margin-left: 3px; }
.fr .c4 { text-align: right; color: #777; }

.mark { position: absolute; border: 2px solid #ee3b3b; }
.m1 { left: 837px; top: 177px; width: 71px; height: 23px; }
.m2 { left: 851px; top: 233px; width: 57px; height: 24px; }
.m3 { left: 737px; top: 447px; width: 81px; height: 38px; }
.watermark { position: absolute; left: 890px; top: 586px; font-family: "Liberation Sans", sans-serif; font-size: 18px; line-height: 22px; color: rgba(120,120,120,.75); white-space: nowrap; }
```
